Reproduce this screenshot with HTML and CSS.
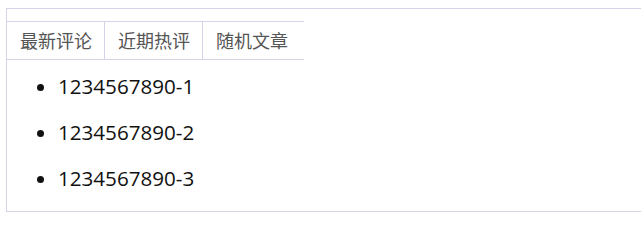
FILE: index.html
```html
<!DOCTYPE html>
<html lang="zh">
<head>
<meta charset="utf-8">
<link rel="stylesheet" href="styles.css">
</head>
<body>
<div class="box">
  <div class="tabs">
    <div class="tab">最新评论</div>
    <div class="tab">近期热评</div>
    <div class="tab">随机文章</div>
  </div>
  <ul class="list">
    <li>1234567890-1</li>
    <li>1234567890-2</li>
    <li>1234567890-3</li>
  </ul>
</div>
</body>
</html>
```
FILE: styles.css
```css
html, body {
  margin: 0;
  padding: 0;
  background: #fff;
  overflow: hidden;
}
body {
  font-family: "Open Sans", "Noto Sans CJK SC", sans-serif;
}
.box {
  margin: 8px 0 0 6px;
  width: 700px;
  border: 1px solid #d4d4e8;
  padding-top: 12px;
  box-sizing: border-box;
}
.tabs {
  display: flex;
  width: 297px;
  border-top: 1px solid #d4d4e8;
  border-bottom: 1px solid #d4d4e8;
}
.tab {
  height: 37px;
  line-height: 37px;
  padding: 0 12px 0 13px;
  font-size: 18px;
  font-family: "Noto Sans CJK SC", sans-serif;
  color: #555;
  border-right: 1px solid #d4d4e8;
}
.tab:last-child {
  border-right: none;
}
.list {
  margin: 0;
  padding: 3px 0 10px 51px;
  list-style: disc;
}
.list li {
  line-height: 46px;
  font-size: 20.6px;
  color: #111;
}
```
